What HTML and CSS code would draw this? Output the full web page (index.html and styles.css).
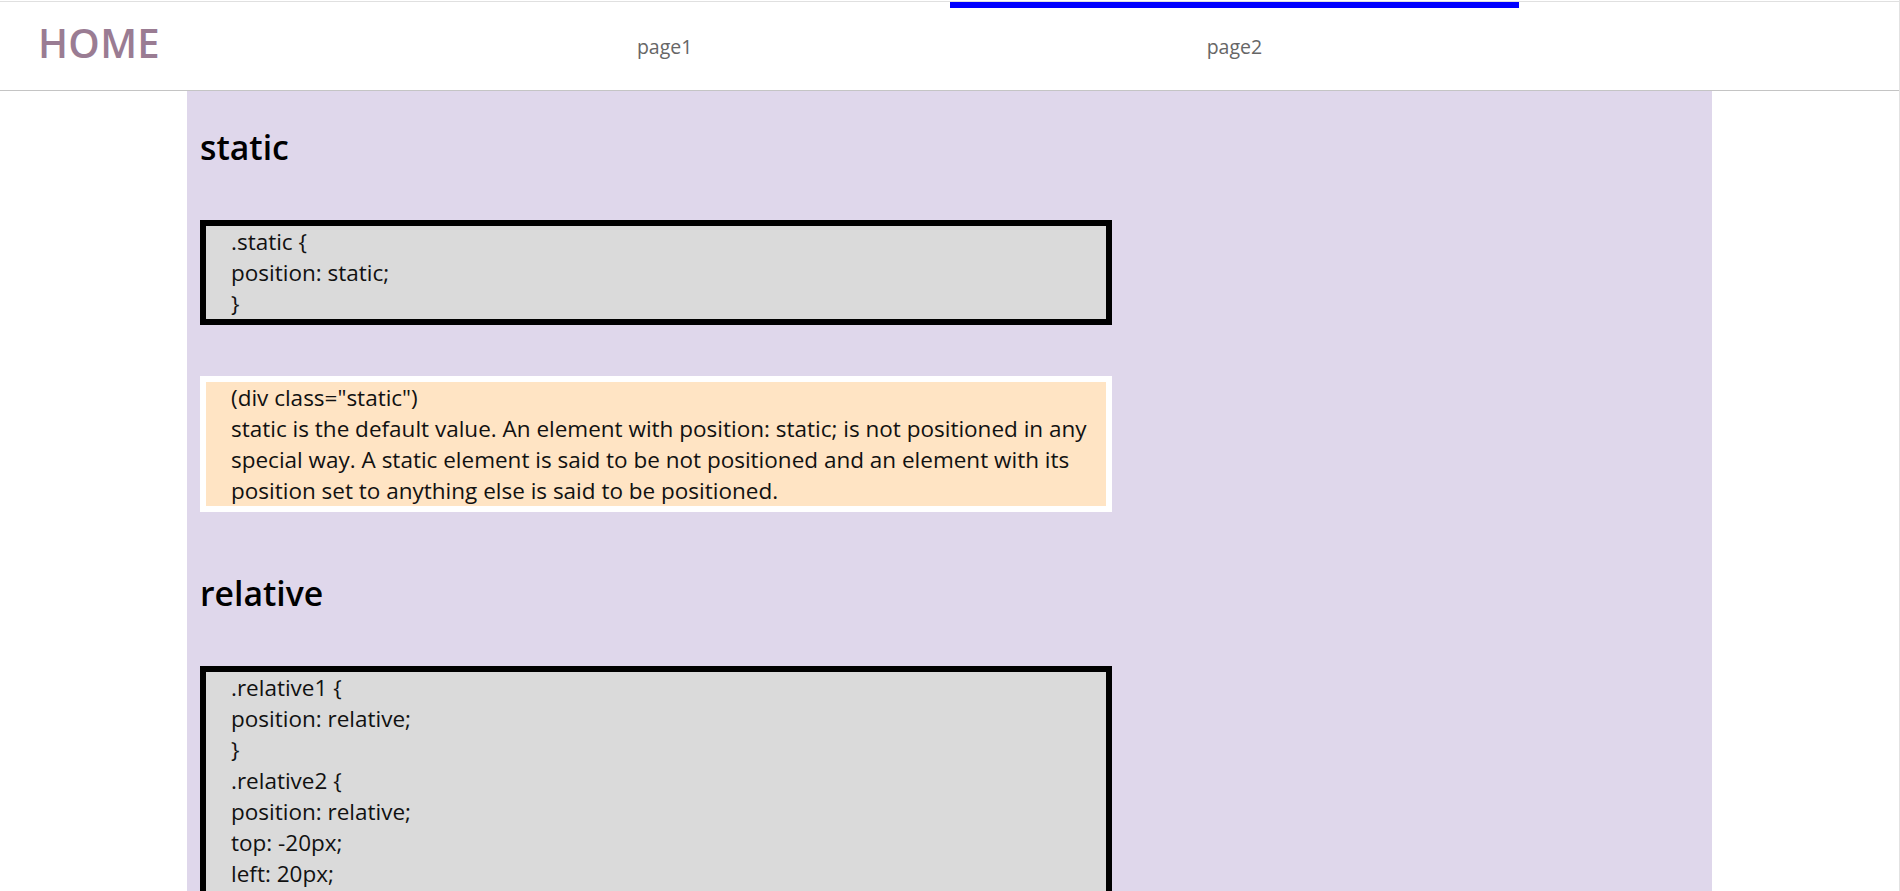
FILE: index.html
```html
<!DOCTYPE html>
<html lang="en">
<head>
<meta charset="utf-8">
<title>Position</title>
<link rel="stylesheet" href="styles.css">
</head>
<body>
<div class="page">
  <header class="topbar">
    <div class="brand">HOME</div>
    <nav class="nav">
      <a class="nav-link" href="#">page1</a>
      <a class="nav-link active" href="#">page2</a>
    </nav>
  </header>
  <main class="content">
    <section class="section">
      <h2 class="title">static</h2>
      <div class="code">
        <div>.static {</div>
        <div>position: static;</div>
        <div>}</div>
      </div>
      <div class="demo">
        <div>(div class="static")</div>
        <div>static is the default value. An element with position: static; is not positioned in any special way. A static element is said to be not positioned and an element with its position set to anything else is said to be positioned.</div>
      </div>
    </section>
    <section class="section">
      <h2 class="title">relative</h2>
      <div class="code">
        <div>.relative1 {</div>
        <div>position: relative;</div>
        <div>}</div>
        <div>.relative2 {</div>
        <div>position: relative;</div>
        <div>top: -20px;</div>
        <div>left: 20px;</div>
        <div>background-color: white;</div>
        <div>width: 500px;</div>
        <div>}</div>
      </div>
    </section>
  </main>
</div>
</body>
</html>
```

FILE: styles.css
```css
html, body {
  margin: 0;
  padding: 0;
  background: #ffffff;
}

body {
  font-family: "Open Sans", "Noto Sans", sans-serif;
  color: #111111;
}

.page {
  min-height: 100vh;
  border-right: 1px solid #e2e2e2;
  box-sizing: border-box;
  padding-top: 1px;
}

.topbar {
  display: flex;
  align-items: stretch;
  height: 88px;
  border-top: 1px solid #e0e0e0;
  border-bottom: 1px solid #c4c4c4;
  background: #ffffff;
}

.brand {
  width: 20%;
  box-sizing: border-box;
  padding-left: 38px;
  padding-bottom: 7px;
  display: flex;
  align-items: center;
  font-size: 40px;
  font-weight: 600;
  color: #9a7c93;
  letter-spacing: 0.3px;
}

.nav {
  display: flex;
  width: 60%;
}

.nav-link {
  flex: 1;
  display: flex;
  align-items: center;
  justify-content: center;
  border-top: 6px solid transparent;
  border-bottom: 6px solid transparent;
  font-size: 19.5px;
  color: #666666;
  text-decoration: none;
}

.nav-link.active {
  border-top-color: #0000ff;
}

.content {
  width: 1525px;
  margin: 0 auto;
  background: #dfd7eb;
  box-sizing: border-box;
  padding: 33px 13px 40px;
  min-height: 800px;
  font-size: 22.5px;
  line-height: 31px;
}

.section + .section {
  margin-top: 58px;
}

.title {
  margin: 0;
  font-size: 33.75px;
  line-height: 46px;
  font-weight: 600;
  color: #000000;
}

.code {
  width: 912px;
  box-sizing: border-box;
  margin-top: 50px;
  border: 6px solid #000000;
  background: #dadada;
  padding: 0 10px 0 25px;
}

.demo {
  width: 912px;
  box-sizing: border-box;
  margin-top: 51px;
  border: 6px solid #ffffff;
  background: #ffe4c4;
  padding: 0 10px 0 25px;
}
```
